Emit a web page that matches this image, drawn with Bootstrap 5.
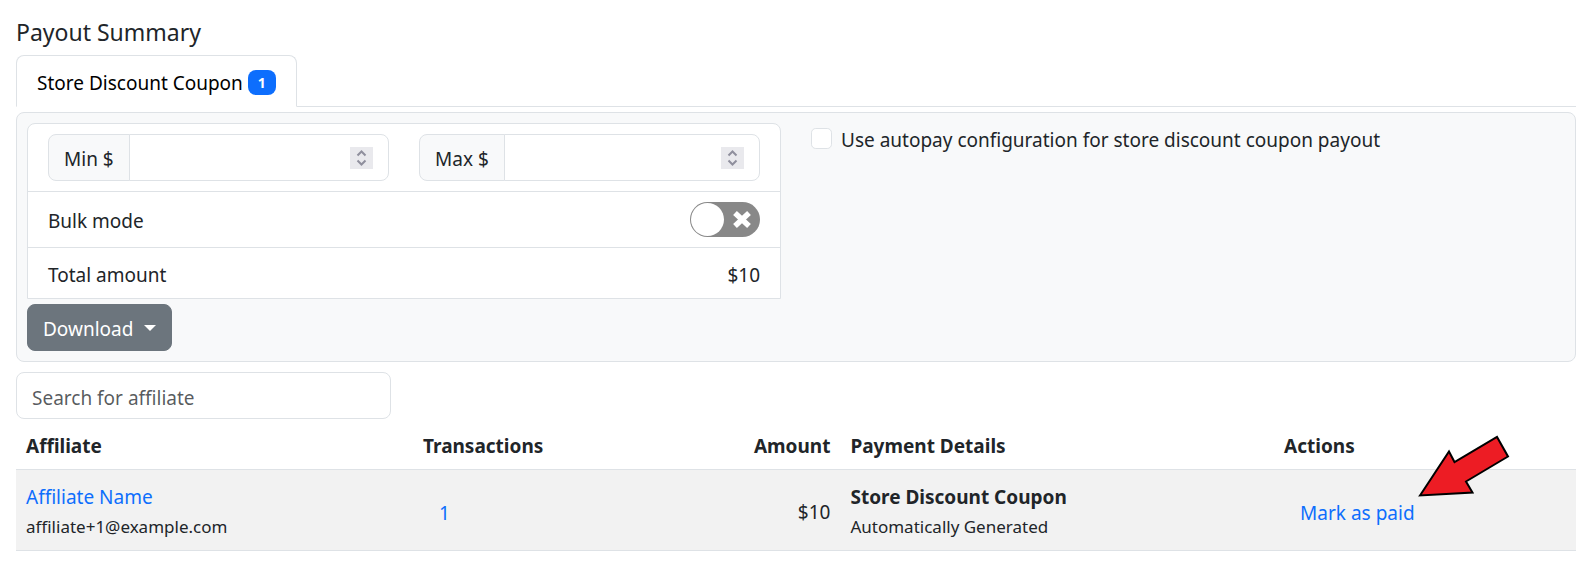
<!DOCTYPE html>
<html lang="en">
<head>
<meta charset="utf-8">
<meta name="viewport" content="width=device-width, initial-scale=1">
<title>Payout Summary</title>
<link href="https://cdn.jsdelivr.net/npm/bootstrap@5.3.0/dist/css/bootstrap.min.css" rel="stylesheet">
<style>
  :root { --gap: 10px; --line: #dee2e6; }
  body { font-family: "Segoe UI", "Noto Sans", sans-serif; font-size: 19px; line-height: 30px; color: #212529; background: #fff; }
  .page { padding: 17px 13px 16px 16px; }
  .page-title { font-size: 23px; line-height: 30px; margin-bottom: 8px; font-weight: 400; }
  .row { --bs-gutter-x: 30px; }
  .form-control, .input-group-text, .btn { font-size: 19px; line-height: 29px; padding: 10px 15px 6px; border-radius: 8px; }
  .form-control, .input-group-text { border-color: var(--line); }
  .form-control { height: 47px; }
  .input-group-text { background: #f8f9fa; }
  .nav-tabs .nav-link { padding: 12px 20px 8px; border-radius: 8px 8px 0 0; }
  .nav-tabs .nav-link.active { color: #000; }
  .nav-tabs .badge { font-size: 14px; line-height: 15px; padding: 5px 10px; border-radius: 8px; vertical-align: 2px; background: #0d6efd; }
  .panel { background: #f8f9fa; border: 1px solid var(--line); border-radius: 8px; padding: var(--gap); margin: 5px 0 var(--gap); }
  .options { border: 1px solid var(--line); border-radius: 8px 8px 0 0; background: #fff; margin-bottom: 5px; }
  .options > div { padding: var(--gap) 20px; }
  .options > div + div { border-top: 1px solid var(--line); }
  .options > .total { padding: 12px 20px 8px; }
  .options label[for="bulk"] { padding-top: 2px; }
  .stepper { appearance: textfield; -moz-appearance: textfield; background: #fff url("data:image/svg+xml,%3Csvg xmlns='http://www.w3.org/2000/svg' width='23' height='22'%3E%3Cpath fill='%23e9e9ed' d='M0 0h23v22H0z'/%3E%3Cpath fill='none' stroke='%238f8f9d' stroke-width='2' d='M7.500 8.500l4-4 4 4M7.500 13.500l4 4 4-4'/%3E%3C/svg%3E") no-repeat right 15px center; }
  .stepper::-webkit-inner-spin-button { display: none; }
  .toggle { appearance: none; width: 70px; height: 35px; border-radius: 18px; cursor: pointer; background: #888 url("data:image/svg+xml,%3Csvg xmlns='http://www.w3.org/2000/svg' width='70' height='35'%3E%3Ccircle cx='17.500' cy='17.500' r='16.500' fill='white'/%3E%3Cpath stroke='white' stroke-width='5.500' d='M45 11l14 13M59 11l-14 13'/%3E%3C/svg%3E") no-repeat; }
  .autopay { gap: 9px; }
  .autopay label { padding-top: 2px; }
  .tick { width: 21px; height: 21px; border-color: var(--line); border-radius: 5px; margin: 5px 0 0; }
  .btn-secondary::after { margin-left: 11px; border-width: 6px 6px 0; vertical-align: 5px; }
  .search { max-width: 375px; }
  .payouts { table-layout: fixed; margin: 0; color: inherit; }
  .payouts > :not(caption) > * > * { padding: 12px var(--gap) 8px; }
  .payouts .sub { font-size: 17px; }
  .payouts .btn { padding: 0 16px; border: 0; }
  a, .btn-link { color: #0d6efd; text-decoration: none; }
  .w-name { width: 25.45%; } .w-count { width: 14%; } .w-amount { width: 13.4%; } .w-details { width: 27.8%; }
  .pointer { position: absolute; left: 100%; bottom: 30px; margin-left: -13px; pointer-events: none; }
</style>
</head>
<body>
<main class="page">
  <h1 class="page-title">Payout Summary</h1>
  <ul class="nav nav-tabs">
    <li class="nav-item"><a class="nav-link active" href="#coupon" aria-current="page">Store Discount Coupon <span class="badge">1</span></a></li>
  </ul>

  <section class="panel" id="coupon">
    <div class="row">
      <div class="col-6">
        <div class="options">
          <div>
            <div class="row">
              <div class="col-6"><div class="input-group"><label class="input-group-text" for="min">Min $</label><input class="form-control stepper" type="number" id="min"></div></div>
              <div class="col-6"><div class="input-group"><label class="input-group-text" for="max">Max $</label><input class="form-control stepper" type="number" id="max"></div></div>
            </div>
          </div>
          <div class="d-flex justify-content-between align-items-center">
            <label for="bulk">Bulk mode</label>
            <input class="toggle" type="checkbox" role="switch" id="bulk">
          </div>
          <div class="total d-flex justify-content-between"><span>Total amount</span><span>$10</span></div>
        </div>
      </div>
      <div class="col-6">
        <div class="autopay d-flex align-items-start">
          <input class="form-check-input tick flex-shrink-0" type="checkbox" id="autopay">
          <label for="autopay">Use autopay configuration for store discount coupon payout</label>
        </div>
      </div>
    </div>
    <button class="btn btn-secondary dropdown-toggle d-block" type="button" data-bs-toggle="dropdown">Download</button>
  </section>

  <input class="form-control search" type="search" placeholder="Search for affiliate" aria-label="Search for affiliate">

  <table class="table table-striped align-middle payouts">
    <thead>
      <tr>
        <th class="w-name" scope="col">Affiliate</th>
        <th class="w-count" scope="col">Transactions</th>
        <th class="w-amount text-end" scope="col">Amount</th>
        <th class="w-details" scope="col">Payment Details</th>
        <th scope="col">Actions</th>
      </tr>
    </thead>
    <tbody>
      <tr>
        <td><a href="#affiliate">Affiliate Name</a><div class="sub">affiliate+1@example.com</div></td>
        <td><button class="btn btn-link" type="button">1</button></td>
        <td class="text-end">$10</td>
        <td><strong>Store Discount Coupon</strong><div class="sub">Automatically Generated</div></td>
        <td>
          <span class="position-relative d-inline-block">
            <button class="btn btn-link" type="button">Mark as paid</button>
            <svg class="pointer" width="92" height="64" viewBox="0 0 92 64" aria-hidden="true">
              <path d="M2 61.500L31 17.500l5.500 10.500L79 3l11 19.500-42 25 6.500 11z" fill="#ed1c24" stroke="#000" stroke-width="2"/>
            </svg>
          </span>
        </td>
      </tr>
    </tbody>
  </table>
</main>
<script src="https://cdn.jsdelivr.net/npm/bootstrap@5.3.0/dist/js/bootstrap.bundle.min.js"></script>
</body>
</html>
